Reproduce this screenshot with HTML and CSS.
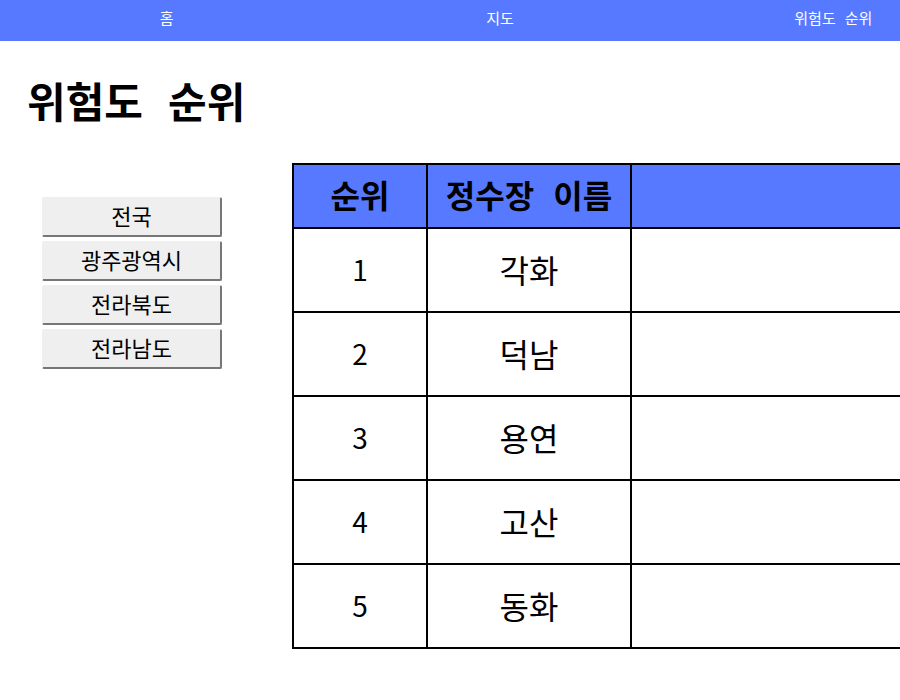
FILE: index.html
```html
<!DOCTYPE html>
<html lang="ko">
<head>
<meta charset="utf-8">
<title>위험도 순위</title>
<link rel="stylesheet" href="styles.css">
</head>
<body>
<nav class="nav">
<a href="#home">홈</a>
<a href="#map">지도</a>
<a href="#rank">위험도 순위</a>
</nav>
<h1 class="title">위험도 순위</h1>
<main class="content">
<div class="regions">
<button type="button">전국</button>
<button type="button">광주광역시</button>
<button type="button">전라북도</button>
<button type="button">전라남도</button>
</div>
<div class="table-wrap">
<table class="ranking">
<colgroup><col class="col-rank"><col class="col-name"><col></colgroup>
<thead><tr><th scope="col">순위</th><th scope="col">정수장 이름</th><th></th></tr></thead>
<tbody>
<tr><td class="rank">1</td><td>각화</td><td></td></tr>
<tr><td class="rank">2</td><td>덕남</td><td></td></tr>
<tr><td class="rank">3</td><td>용연</td><td></td></tr>
<tr><td class="rank">4</td><td>고산</td><td></td></tr>
<tr><td class="rank">5</td><td>동화</td><td></td></tr>
</tbody>
</table>
</div>
</main>
</body>
</html>
```
FILE: styles.css
```css
* { box-sizing: border-box; }
body {
  margin: 0;
  background: #fff;
  color: #000;
  font-family: "Liberation Mono", "Noto Sans CJK KR", monospace;
}
.nav {
  display: grid;
  grid-template-columns: 10fr 10fr 7fr;
  height: 41px;
  background: #5779ff;
}
.nav a {
  display: flex;
  align-items: center;
  justify-content: center;
  color: #fff;
  font-size: 15px;
  line-height: 22px;
  text-decoration: none;
}
.nav a:last-child { padding-left: 100px; }
.title {
  margin: 37px 27px 27px;
  font-size: 42px;
  line-height: 58px;
}
.content {
  display: flex;
  align-items: flex-start;
}
.regions {
  display: flex;
  flex: none;
  flex-direction: column;
  gap: 4px;
  width: 180px;
  margin: 34px 70px 0 42px;
}
.regions button {
  height: 40px;
  padding: 0 0 3px;
  border: 1px solid #efefef;
  border-right: 2px solid #767676;
  border-bottom: 2px solid #767676;
  border-radius: 2px;
  background: #efefef;
  color: #000;
  font-family: "Noto Sans CJK KR", sans-serif;
  font-size: 22px;
  line-height: 30px;
}
.table-wrap {
  flex: 1;
  min-width: 0;
}
.ranking {
  width: 100%;
  border-collapse: collapse;
  table-layout: fixed;
}
.col-rank { width: 134px; }
.col-name { width: 204px; }
.ranking th,
.ranking td {
  height: 84px;
  padding: 0;
  border: 2px solid #000;
  text-align: center;
  font-size: 32px;
  line-height: 40px;
}
.ranking th {
  height: 64px;
  padding-top: 8px;
  background: #5779ff;
}
.ranking td {
  padding-bottom: 3px;
  font-family: "Noto Sans CJK KR", sans-serif;
}
.ranking .rank { font-size: 28px; }
.ranking th:last-child,
.ranking td:last-child { border-right: 0; }
```
